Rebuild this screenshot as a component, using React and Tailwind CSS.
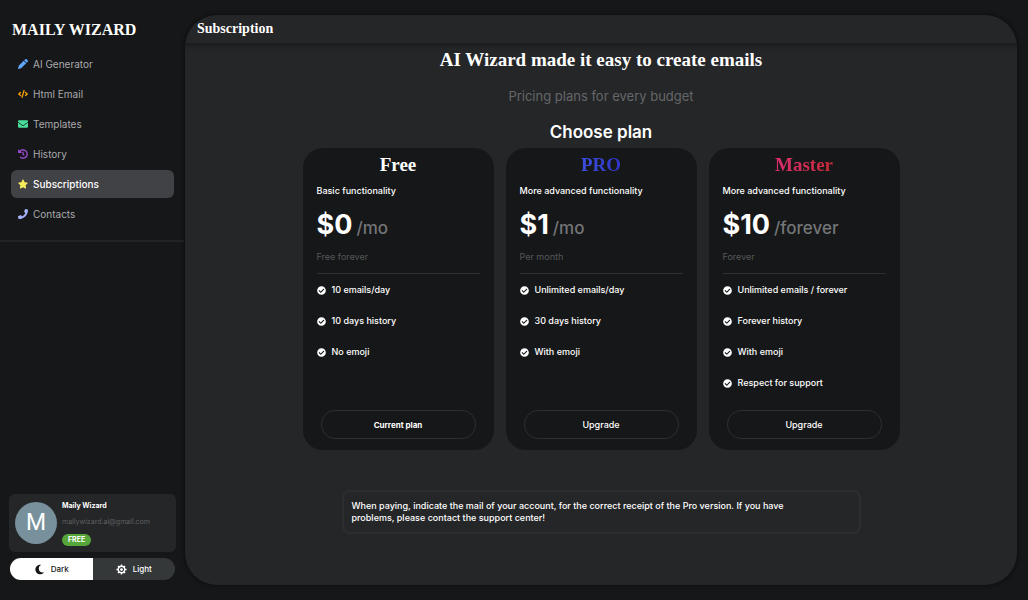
import { useState } from "react";
import { FaCheckCircle, FaCode, FaHistory, FaPhone, FaStar } from "react-icons/fa";
import { FaEnvelope, FaMoon, FaPen } from "react-icons/fa6";

const navItems = [
  { label: "AI Generator", icon: FaPen, color: "text-[#60a5fa]" },
  { label: "Html Email", icon: FaCode, color: "text-[#f59e0b]" },
  { label: "Templates", icon: FaEnvelope, color: "text-[#4ade9b]" },
  { label: "History", icon: FaHistory, color: "text-[#a04fd8]" },
  { label: "Subscriptions", icon: FaStar, color: "text-[#f5ec5a]", active: true },
  { label: "Contacts", icon: FaPhone, color: "text-[#a5b4fc]" },
];

const plans = [
  {
    name: "Free",
    nameClass: "text-white",
    summary: "Basic functionality",
    price: "$0",
    period: "/mo",
    note: "Free forever",
    features: ["10 emails/day", "10 days history", "No emoji"],
    action: "Current plan",
    actionClass: "text-[8px] font-bold",
  },
  {
    name: "PRO",
    nameClass: "bg-linear-to-r from-[#3b4fe0] to-[#2f35c4] bg-clip-text text-transparent",
    summary: "More advanced functionality",
    price: "$1",
    period: "/mo",
    note: "Per month",
    features: ["Unlimited emails/day", "30 days history", "With emoji"],
    action: "Upgrade",
    actionClass: "text-[9px] font-medium",
  },
  {
    name: "Master",
    nameClass: "bg-linear-to-r from-[#db2d6e] to-[#c42b35] bg-clip-text text-transparent",
    summary: "More advanced functionality",
    price: "$10",
    period: "/forever",
    note: "Forever",
    features: ["Unlimited emails / forever", "Forever history", "With emoji", "Respect for support"],
    action: "Upgrade",
    actionClass: "text-[9px] font-medium",
  },
];

function SunIcon() {
  return (
    <svg viewBox="0 0 24 24" className="size-[11px]" fill="none" stroke="currentColor" aria-hidden="true">
      <circle cx="12" cy="12" r="7" strokeWidth="3" />
      <circle cx="12" cy="12" r="3" fill="currentColor" stroke="none" />
      <path
        d="M12 1v4M12 19v4M1 12h4M19 12h4M4.2 4.2l3 3M16.8 16.8l3 3M4.2 19.8l3-3M16.8 7.2l3-3"
        strokeWidth="3"
      />
    </svg>
  );
}

function Sidebar({ theme, setTheme }) {
  return (
    <aside className="flex w-46 shrink-0 flex-col">
      <div className="border-b-2 border-[#222325] pb-3">
        <h1 className="px-3 pt-5 font-['Liberation_Serif',serif] text-[16px] leading-5 font-bold text-white">
          MAILY WIZARD
        </h1>
        <nav className="mt-2.5 flex flex-col gap-0.5 pr-2.5 pl-[11px]">
          {navItems.map(({ label, icon: Icon, color, active }) => (
            <a
              key={label}
              href="#"
              aria-current={active ? "page" : undefined}
              className={`flex h-7 items-center gap-[5px] rounded-md px-[7px] text-[10px] ${
                active ? "bg-[#414246] font-medium text-white" : "text-[#a9aaae]"
              }`}
            >
              <Icon className={`size-2.5 ${color}`} />
              {label}
            </a>
          ))}
        </nav>
      </div>

      <div className="mt-auto pr-2 pb-5 pl-[9px]">
        <div className="flex items-center gap-[5px] rounded-md bg-[#252628] px-1.5 py-1.5">
          <div className="flex size-[42px] shrink-0 items-center justify-center rounded-full bg-[#78909c] font-[Roboto,sans-serif] text-[23px] text-white">
            M
          </div>
          <div className="flex min-w-0 flex-col items-start">
            <p className="text-[7px] leading-3 font-bold text-white">Maily Wizard</p>
            <p className="mt-1 text-[7px] leading-3 text-[#5e6063]">mailywizard.ai@gmail.com</p>
            <span className="mt-1.5 rounded-full bg-[#57a639] px-1.5 text-[7px] leading-3 font-bold text-white">
              FREE
            </span>
          </div>
        </div>
        <div className="mx-px mt-1.5 flex h-[22px] overflow-hidden rounded-full bg-[#353839] text-[8px] font-medium">
          <button
            type="button"
            aria-pressed={theme === "dark"}
            onClick={() => setTheme("dark")}
            className="flex flex-1 items-center justify-center gap-1.5 bg-white text-[#161718]"
          >
            <FaMoon className="size-[11px]" />
            Dark
          </button>
          <button
            type="button"
            aria-pressed={theme === "light"}
            onClick={() => setTheme("light")}
            className="flex flex-1 items-center justify-center gap-1.5 text-white"
          >
            <SunIcon />
            Light
          </button>
        </div>
      </div>
    </aside>
  );
}

function PlanCard({ plan }) {
  return (
    <section className="flex flex-col rounded-[20px] bg-[#161718] px-3.5 pb-[11px]">
      <h4 className="mt-[5px] text-center font-['Liberation_Serif',serif] text-[19px] leading-6 font-bold">
        <span className={plan.nameClass}>{plan.name}</span>
      </h4>
      <p className="mt-2 text-[9px] leading-3 font-medium text-white">{plan.summary}</p>
      <p className="mt-2.5 flex items-baseline gap-1 leading-9">
        <span className="text-[27px] font-bold text-white">{plan.price}</span>
        <span className="text-[17px] font-medium text-[#737577]">{plan.period}</span>
      </p>
      <p className="mt-[5px] text-[9px] leading-3 text-[#55585a]">{plan.note}</p>
      <hr className="mt-2.5 border-[#2d2e30]" />
      <ul className="mt-2.5 flex flex-col gap-[19px]">
        {plan.features.map((feature) => (
          <li key={feature} className="flex items-center gap-1.5 text-[9px] leading-3 font-medium text-white">
            <FaCheckCircle className="size-[9px]" />
            {feature}
          </li>
        ))}
      </ul>
      <button
        type="button"
        className={`mx-1 mt-auto h-[29px] rounded-[14px] border border-[#2d2e30] text-white ${plan.actionClass}`}
      >
        {plan.action}
      </button>
    </section>
  );
}

export default function App() {
  const [theme, setTheme] = useState("dark");
  return (
    <div className="flex min-h-screen bg-[#161718] font-[Inter,sans-serif]">
      <Sidebar theme={theme} setTheme={setTheme} />
      <main className="my-[15px] mr-[11px] ml-px flex min-w-0 flex-1 flex-col overflow-hidden rounded-[32px] bg-[#252628] shadow-[0_0_4px_#0a0a0b]">
        <header className="px-3 shadow-[0_3px_4px_#1b1c1d]">
          <h2 className="font-['Liberation_Serif',serif] text-[14px] leading-7 font-bold text-white">Subscription</h2>
        </header>
        <div className="flex flex-col items-center px-4 pt-[5px] pb-12">
          <h3 className="font-['Liberation_Serif',serif] text-[19px] leading-6 font-bold text-white">
            AI Wizard made it easy to create emails
          </h3>
          <p className="mt-3.5 text-[13px] leading-5 text-[#646668]">Pricing plans for every budget</p>
          <h3 className="mt-3.5 text-[17px] leading-6 font-semibold text-white">Choose plan</h3>
          <div className="mt-1 grid min-h-[302px] w-full max-w-[597px] grid-cols-3 gap-3">
            {plans.map((plan) => (
              <PlanCard key={plan.name} plan={plan} />
            ))}
          </div>
          <p className="mt-10 w-full max-w-[519px] rounded-lg border-2 border-[#2d2e30] py-2 pr-10 pl-2 text-[9px] leading-3 font-medium text-white">
            When paying, indicate the mail of your account, for the correct receipt of the Pro version. If you have
            problems, please contact the support center!
          </p>
        </div>
      </main>
    </div>
  );
}
